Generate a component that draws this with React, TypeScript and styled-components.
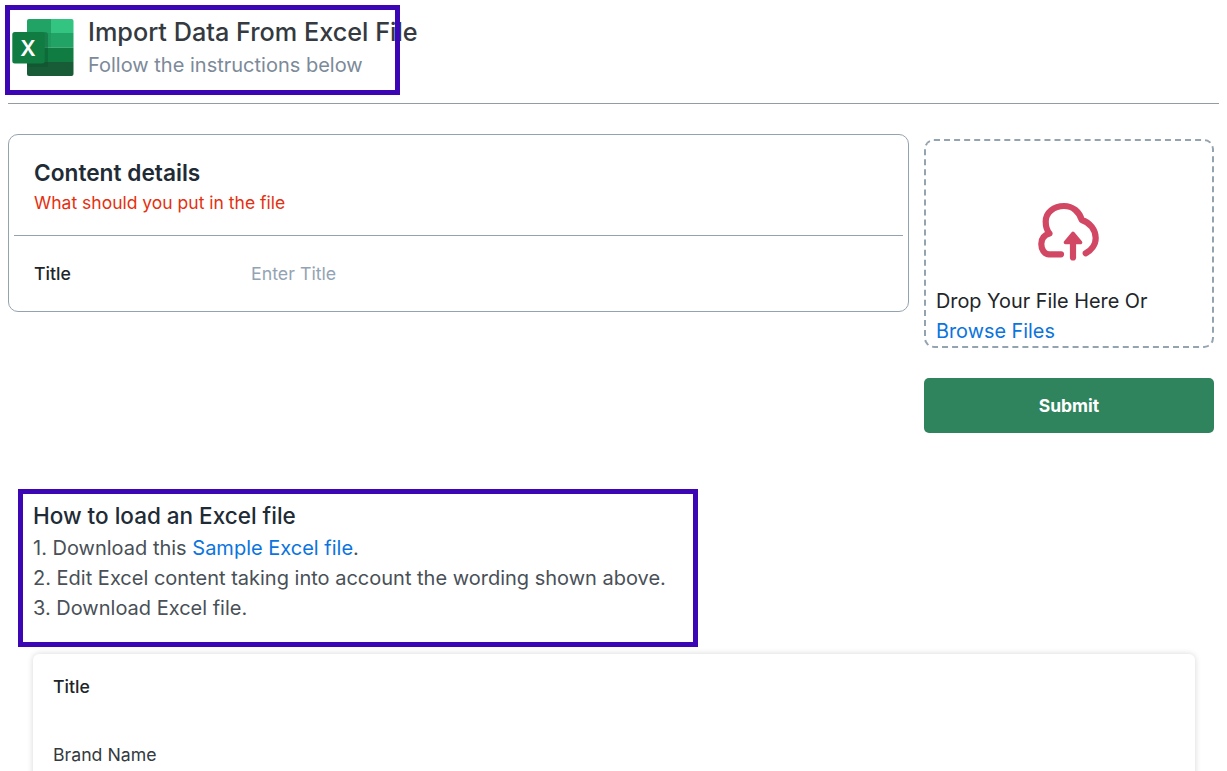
import React from 'react';
import styled, { createGlobalStyle } from 'styled-components';

const GlobalStyle = createGlobalStyle`
  html, body {
    margin: 0;
    padding: 0;
    height: 771px;
    overflow: hidden;
    background: #fff;
    font-family: Inter, "Liberation Sans", sans-serif;
  }
`;

const ExcelLogo = () => (
  <svg width="64" height="58" viewBox="0 0 64 58">
    <path d="M16 3a2 2 0 0 1 2-2h22v14H16z" fill="#21a366" />
    <path d="M40 1h20.500a2 2 0 0 1 2 2v12H40z" fill="#33c481" />
    <rect x="16" y="15" width="24" height="14.700" fill="#1f9a5e" />
    <rect x="40" y="15" width="22.500" height="14.700" fill="#21a366" />
    <rect x="16" y="29.700" width="24" height="14.300" fill="#107c41" />
    <rect x="40" y="29.700" width="22.500" height="14.300" fill="#107c41" />
    <path d="M16 44h46.500v12a2 2 0 0 1-2 2H18a2 2 0 0 1-2-2z" fill="#185c37" />
    <path d="M16 14h18a3 3 0 0 1 3 3v32H16z" fill="#0c4a2a" opacity="0.35" />
    <rect x="1.300" y="14" width="32.400" height="31.500" rx="2.500" fill="#107c41" />
    <text x="17" y="37.500" textAnchor="middle" fontFamily="Inter, sans-serif" fontSize="21.500" fontWeight="600" fill="#fff">
      X
    </text>
  </svg>
);

const CloudUpload = () => (
  <svg width="62" height="60" viewBox="0 0 62 60" fill="none" stroke="#d14764" strokeWidth="6.200" strokeLinecap="round" strokeLinejoin="round">
    <path d="M23 52.300H11C6 52.300 3.300 47 3.300 42C3.300 37 6 33 11.500 31.500C8.500 28 7.700 23 7.700 19.500C7.700 10.500 16 4 26 4C35 4 41.500 10 43.700 18C52 20.500 57.700 28 57.700 36C57.700 43 53 48.500 47.700 51.300" />
    <path d="M35 55.500V40" />
    <path d="M27.500 40.500L35 31.500L42.500 40.500Z" fill="#d14764" strokeWidth="3.600" />
  </svg>
);

export default function App() {
  return (
    <>
      <GlobalStyle />
      <Page>
        <Header>
          <ExcelLogo />
          <HeaderText>
            <PageTitle>Import Data From Excel File</PageTitle>
            <PageSubtitle>Follow the instructions below</PageSubtitle>
          </HeaderText>
        </Header>
        <Divider />
        <Columns>
          <DetailsCard>
            <CardHead>
              <CardTitle>Content details</CardTitle>
              <CardHint>What should you put in the file</CardHint>
            </CardHead>
            <CardRule />
            <FieldRow>
              <FieldLabel>Title</FieldLabel>
              <FieldPlaceholder>Enter Title</FieldPlaceholder>
            </FieldRow>
          </DetailsCard>
          <SideColumn>
            <DropZone>
              <IconSlot>
                <CloudUpload />
              </IconSlot>
              <DropText>Drop Your File Here Or</DropText>
              <BrowseLink>Browse Files</BrowseLink>
            </DropZone>
            <SubmitButton>Submit</SubmitButton>
          </SideColumn>
        </Columns>
        <HowTo>
          <HowToTitle>How to load an Excel file</HowToTitle>
          <Step>
            1. Download this <InlineLink>Sample Excel file</InlineLink>.
          </Step>
          <Step>2. Edit Excel content taking into account the wording shown above.</Step>
          <Step>3. Download Excel file.</Step>
        </HowTo>
        <PreviewCard>
          <PreviewHeading>Title</PreviewHeading>
          <PreviewItem>Brand Name</PreviewItem>
        </PreviewCard>
        <Annotation $left={5} $top={5} $width={395} $height={90} />
        <Annotation $left={18} $top={489} $width={680} $height={158} />
      </Page>
    </>
  );
}

const Page = styled.div`
  position: relative;
  width: 1227px;
  height: 771px;
  overflow: hidden;
  box-sizing: border-box;
  padding: 0 8px;
`;

const Header = styled.div`
  display: flex;
  align-items: flex-start;
  gap: 13px;
  height: 103px;
  box-sizing: border-box;
  padding: 18px 0 0 3px;
`;

const HeaderText = styled.div`
  display: flex;
  flex-direction: column;
  white-space: nowrap;
`;

const PageTitle = styled.div`
  font-size: 25.250px;
  line-height: 29px;
  font-weight: 500;
  color: #343a40;
`;

const PageSubtitle = styled.div`
  margin-top: 4px;
  font-size: 20px;
  line-height: 28px;
  color: #7c8a99;
`;

const Divider = styled.div`
  width: 1211px;
  height: 1px;
  background: #939ba3;
`;

const Columns = styled.div`
  display: flex;
  align-items: flex-start;
  gap: 15px;
  margin-top: 30px;
`;

const DetailsCard = styled.div`
  width: 901px;
  height: 178px;
  box-sizing: border-box;
  border: 1px solid #94a3b0;
  border-radius: 10px;
  padding: 0 5px;
`;

const CardHead = styled.div`
  height: 100px;
  box-sizing: border-box;
  padding: 24px 0 0 20px;
`;

const CardTitle = styled.div`
  font-size: 22.700px;
  line-height: 28px;
  font-weight: 600;
  color: #212b36;
`;

const CardHint = styled.div`
  margin-top: 4px;
  font-size: 17.500px;
  line-height: 24px;
  color: #e5300f;
`;

const CardRule = styled.div`
  height: 1px;
  background: #94a3b0;
`;

const FieldRow = styled.div`
  display: flex;
  align-items: center;
  height: 74px;
  padding-left: 20px;
`;

const FieldLabel = styled.div`
  width: 217px;
  font-size: 17.700px;
  font-weight: 500;
  color: #212529;
`;

const FieldPlaceholder = styled.div`
  font-size: 17.800px;
  color: #94a3b3;
`;

const SideColumn = styled.div`
  display: flex;
  flex-direction: column;
  width: 290px;
  margin-top: 5px;
  gap: 30px;
`;

const DropZone = styled.div`
  height: 209px;
  box-sizing: border-box;
  border: 2px dashed #94a3b0;
  border-radius: 10px;
  padding: 0 10px;
`;

const IconSlot = styled.div`
  display: flex;
  justify-content: center;
  padding-top: 61px;
  height: 145px;
  box-sizing: border-box;
`;

const DropText = styled.div`
  font-size: 19.850px;
  line-height: 30px;
  color: #212529;
`;

const BrowseLink = styled.div`
  font-size: 19.850px;
  line-height: 30px;
  color: #0b74de;
`;

const SubmitButton = styled.button`
  height: 55px;
  border: none;
  border-radius: 5px;
  background: #2f845e;
  color: #fff;
  font-family: inherit;
  font-size: 17.500px;
  font-weight: 700;
`;

const HowTo = styled.div`
  margin: 68px 0 0 25px;
`;

const HowToTitle = styled.div`
  font-size: 22.500px;
  line-height: 30px;
  font-weight: 500;
  color: #212b36;
  margin-bottom: 2px;
`;

const Step = styled.div`
  font-size: 20px;
  line-height: 30px;
  color: #495057;
`;

const InlineLink = styled.span`
  color: #0b74de;
`;

const PreviewCard = styled.div`
  width: 1162px;
  height: 200px;
  margin: 31px 0 0 25px;
  box-sizing: border-box;
  padding: 21px 20px;
  border-radius: 6px;
  box-shadow: 0 0 6px rgba(0, 0, 0, 0.16);
  background: #fff;
`;

const PreviewHeading = styled.div`
  font-size: 17.700px;
  line-height: 24px;
  font-weight: 500;
  color: #212529;
`;

const PreviewItem = styled.div`
  margin-top: 44px;
  font-size: 17.700px;
  line-height: 24px;
  color: #343a40;
`;

const Annotation = styled.div<{ $left: number; $top: number; $width: number; $height: number }>`
  position: absolute;
  left: ${(p) => p.$left}px;
  top: ${(p) => p.$top}px;
  width: ${(p) => p.$width}px;
  height: ${(p) => p.$height}px;
  box-sizing: border-box;
  border: 5px solid #3d06b5;
  pointer-events: none;
`;
